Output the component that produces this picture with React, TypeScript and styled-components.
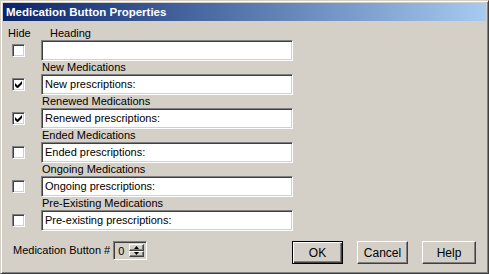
import styled, { createGlobalStyle, css } from "styled-components";

const GlobalStyle = createGlobalStyle`
  html, body {
    margin: 0;
    padding: 0;
    background: #d4d0c8;
  }
  * {
    box-sizing: border-box;
  }
`;

const sunken = css`
  border: 1px solid;
  border-color: #808080 #ffffff #ffffff #808080;
  box-shadow: inset 1px 1px #404040, inset -1px -1px #d4d0c8;
`;

const raised = css`
  border: 1px solid;
  border-color: #ffffff #404040 #404040 #ffffff;
  box-shadow: inset -1px -1px #808080;
`;

const Window = styled.div`
  width: 489px;
  height: 274px;
  padding: 2px;
  display: flex;
  flex-direction: column;
  background: #d4d0c8;
  border: 1px solid;
  border-color: #d4d0c8 #404040 #404040 #d4d0c8;
  box-shadow: inset 1px 1px #ffffff, inset -1px -1px #808080;
  font-family: "Liberation Sans", Arial, sans-serif;
  font-size: 11px;
  color: #000;
`;

const TitleBar = styled.div`
  height: 18px;
  display: flex;
  align-items: center;
  padding-left: 3px;
  background: linear-gradient(to right, #0a246a, #a6caf0);
  color: #ffffff;
  font-weight: bold;
  font-size: 11.5px;
`;

const Body = styled.div`
  flex: 1;
  display: flex;
  flex-direction: column;
  padding-top: 6px;
`;

const Field = styled.div`
  display: grid;
  grid-template-columns: 38px 252px;
  grid-template-rows: 13px 21px;
`;

const Caption = styled.div<{ $indent?: number }>`
  line-height: 13px;
  white-space: nowrap;
  padding-left: ${(p) => p.$indent ?? 1}px;
`;

const CheckCell = styled.div`
  display: flex;
  align-items: center;
  padding-left: 9px;
`;

const CheckBox = styled.div`
  ${sunken};
  width: 13px;
  height: 13px;
  background: #ffffff;
  display: flex;
  align-items: center;
  justify-content: center;
`;

const TextBox = styled.div`
  ${sunken};
  background: #ffffff;
  height: 21px;
  padding-left: 3px;
  line-height: 18px;
  white-space: nowrap;
`;

const Footer = styled.div`
  display: flex;
  align-items: flex-start;
  margin-top: 10px;
  padding-left: 10px;
  padding-right: 10px;
`;

const SpinLabel = styled.div`
  line-height: 19px;
  margin-right: 3px;
`;

const Spinner = styled.div`
  ${sunken};
  width: 34px;
  height: 19px;
  background: #d4d0c8;
  display: flex;
  padding: 2px;
`;

const SpinValue = styled.div`
  flex: 1;
  line-height: 14px;
  padding-left: 2px;
  color: #000000;
`;

const SpinButtons = styled.div`
  width: 15px;
  display: flex;
  flex-direction: column;
`;

const SpinButton = styled.div`
  ${raised};
  flex: 1;
  display: flex;
  align-items: center;
  justify-content: center;
`;

const Buttons = styled.div`
  margin-left: auto;
  display: flex;
  gap: 14px;
`;

const Button = styled.div<{ $width: number; $default?: boolean }>`
  width: ${(p) => p.$width}px;
  height: 23px;
  display: flex;
  align-items: center;
  justify-content: center;
  font-size: 12px;
  ${(p) =>
    p.$default
      ? css`
          border: 1px solid #000000;
          box-shadow: inset 1px 1px #ffffff, inset -1px -1px #404040,
            inset -2px -2px #808080;
        `
      : css`
          border: 1px solid;
          border-color: #ffffff #404040 #404040 #ffffff;
          box-shadow: inset -1px -1px #808080;
        `}
`;

const CheckMark = () => (
  <svg width="7" height="7" viewBox="0 0 7 7">
    <path d="M0 2v3l2 2h1l4-4V0L2.5 4.5z" fill="#000" />
  </svg>
);

const Arrow = ({ up }: { up?: boolean }) => (
  <svg width="5" height="3" viewBox="0 0 5 3">
    <path d={up ? "M2.5 0L5 3H0z" : "M0 0h5L2.5 3z"} fill="#000" />
  </svg>
);

const sections = [
  { label: "New Medications", text: "New prescriptions:", checked: true },
  { label: "Renewed Medications", text: "Renewed prescriptions:", checked: true },
  { label: "Ended Medications", text: "Ended prescriptions:", checked: false },
  { label: "Ongoing Medications", text: "Ongoing prescriptions:", checked: false },
  {
    label: "Pre-Existing Medications",
    text: "Pre-existing prescriptions:",
    checked: false,
  },
];

const App = () => {
  return (
    <>
      <GlobalStyle />
      <Window>
        <TitleBar>Medication Button Properties</TitleBar>
        <Body>
          <Field>
            <Caption $indent={5}>Hide</Caption>
            <Caption $indent={9}>Heading</Caption>
            <CheckCell>
              <CheckBox />
            </CheckCell>
            <TextBox />
          </Field>
          {sections.map((s) => (
            <Field key={s.label}>
              <span />
              <Caption>{s.label}</Caption>
              <CheckCell>
                <CheckBox>{s.checked && <CheckMark />}</CheckBox>
              </CheckCell>
              <TextBox>{s.text}</TextBox>
            </Field>
          ))}
          <Footer>
            <SpinLabel>Medication Button #</SpinLabel>
            <Spinner>
              <SpinValue>0</SpinValue>
              <SpinButtons>
                <SpinButton>
                  <Arrow up />
                </SpinButton>
                <SpinButton>
                  <Arrow />
                </SpinButton>
              </SpinButtons>
            </Spinner>
            <Buttons>
              <Button $width={51} $default>
                OK
              </Button>
              <Button $width={51}>Cancel</Button>
              <Button $width={54}>Help</Button>
            </Buttons>
          </Footer>
        </Body>
      </Window>
    </>
  );
};

export default App;
